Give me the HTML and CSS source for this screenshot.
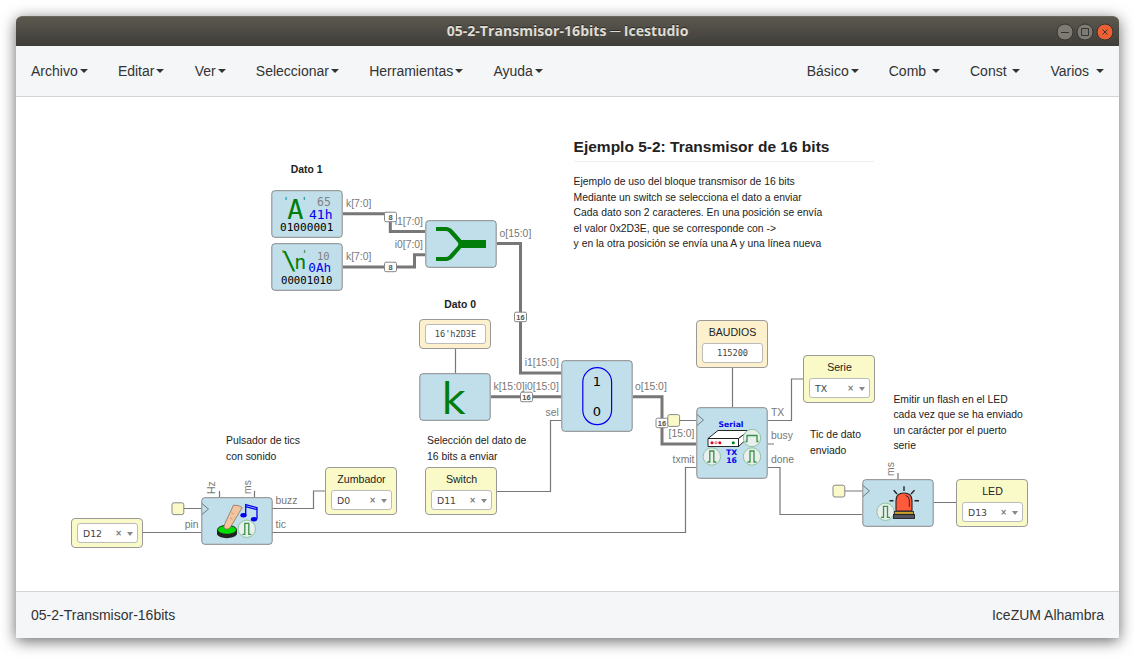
FILE: index.html
```html
<!DOCTYPE html>
<html lang="es">
<head>
<meta charset="utf-8">
<title>05-2-Transmisor-16bits ─ Icestudio</title>
<link rel="stylesheet" href="styles.css">
</head>
<body>
<div class="window">
  <header class="titlebar">
    <span class="title">05-2-Transmisor-16bits ─ Icestudio</span>
    <div class="controls">
      <svg class="control" viewBox="0 0 18 18"><circle cx="9" cy="9" r="8"/><path d="M5 9.5h8"/></svg>
      <svg class="control" viewBox="0 0 18 18"><circle cx="9" cy="9" r="8"/><path d="M5.5 5.500h7v7h-7z"/></svg>
      <svg class="control close" viewBox="0 0 18 18"><circle cx="9" cy="9" r="8"/><path d="M6.500 6.500l5 5M11.500 6.500l-5 5"/></svg>
    </div>
  </header>
  <nav class="menubar">
    <div class="menu menu-main">
      <a>Archivo<i class="caret"></i></a>
      <a>Editar<i class="caret"></i></a>
      <a>Ver<i class="caret"></i></a>
      <a>Seleccionar<i class="caret"></i></a>
      <a>Herramientas<i class="caret"></i></a>
      <a>Ayuda<i class="caret"></i></a>
    </div>
    <div class="menu menu-blocks">
      <a>Básico<i class="caret"></i></a>
      <a>Comb <i class="caret"></i></a>
      <a>Const <i class="caret"></i></a>
      <a>Varios <i class="caret"></i></a>
    </div>
  </nav>
  <main class="canvas">
    <svg class="diagram" viewBox="16 97 1103 494">
      <defs>
        <g id="tic"><circle r="8.700" class="badge"/><path d="M-4.500 5.500H-2V-5.500H2V5.500H4.500" class="pulse"/></g>
        <g id="busy"><circle r="8.700" class="badge"/><path d="M-6.500 3.500H-5V-2.500H5V3.500H6.500" class="pulse"/></g>
      </defs>
      <g class="wire">
        <path d="M455.500 349V373M732.500 367V407"/>
        <path d="M497 491.500H550.500V420.500H561"/>
        <path d="M680 420.500H696M768 420.500H791.500V379H803M768 444H774M768 467.500H780V514.500H862"/>
        <path d="M272 532.500H685.500V467.500H696M272 508.500H313.500V491H325M143 532.500H201M184 508.500H201"/>
        <path d="M219.500 491V497M254.500 491V497M898 473V479M845 491H862M934 502.500H956"/>
      </g>
      <g class="bus">
        <path d="M343 213.700H390.300V231.500H425"/>
        <path d="M343 267H414.500V254.800H425"/>
        <path d="M497 243.500H520.500V373H561"/>
        <path d="M491 396.700H561"/>
        <path d="M633 396.700H662V444H696"/>
      </g>
      <g class="port">
        <text x="346" y="207">k[7:0]</text><text x="346" y="260">k[7:0]</text>
        <text x="423" y="225" class="end">i1[7:0]</text><text x="423" y="248" class="end">i0[7:0]</text>
        <text x="499.500" y="237">o[15:0]</text>
        <text x="558.800" y="366" class="end">i1[15:0]</text><text x="558.800" y="390" class="end">i0[15:0]</text>
        <text x="493.500" y="390">k[15:0]</text><text x="558.800" y="416" class="end">sel</text>
        <text x="635" y="390">o[15:0]</text><text x="694.500" y="437" class="end">[15:0]</text>
        <text x="694.500" y="463" class="end">txmit</text><text x="771" y="416">TX</text>
        <text x="771" y="439">busy</text><text x="771" y="463">done</text>
        <text x="275.500" y="504">buzz</text><text x="275.500" y="528">tic</text>
        <text x="198.500" y="528" class="end">pin</text>
        <text transform="translate(215 494) rotate(-90)">Hz</text>
        <text transform="translate(251 494) rotate(-90)">ms</text>
        <text transform="translate(894 476) rotate(-90)">ms</text>
      </g>
      <g class="block">
        <rect x="271.800" y="190.700" width="70.400" height="46.600" rx="3"/>
        <rect x="271.800" y="243.700" width="70.400" height="46.600" rx="3"/>
        <rect x="425.800" y="220.700" width="70.400" height="46.600" rx="3"/>
        <rect x="419.800" y="373.700" width="70.400" height="46.600" rx="3"/>
        <rect x="561.800" y="360.700" width="70.400" height="70.600" rx="3"/>
        <rect x="696.800" y="407.700" width="70.400" height="70.600" rx="3"/>
        <rect x="862.800" y="479.700" width="70.400" height="46.600" rx="3"/>
        <rect x="201.800" y="497.700" width="70.400" height="46.600" rx="3"/>
      </g>
      <g class="clock"><path d="M697 414.500l6.500 5.500l-6.500 5.500M863 485.500l6.500 5.500l-6.500 5.500M202 503.500l6.500 5.500l-6.500 5.500"/></g>
      <g class="size">
        <rect x="384.500" y="212.200" width="12" height="9.500" rx="1.500"/><text x="390.500" y="220">8</text>
        <rect x="384.500" y="262.200" width="12" height="9.500" rx="1.500"/><text x="390.500" y="270">8</text>
        <rect x="514.500" y="312.200" width="12" height="9.500" rx="1.500"/><text x="520.500" y="320">16</text>
        <rect x="520.500" y="392.200" width="12" height="9.500" rx="1.500"/><text x="526.500" y="400">16</text>
        <rect x="656" y="418.200" width="12" height="9.500" rx="1.500"/><text x="662" y="426">16</text>
      </g>
      <g class="clockpin">
        <rect x="172" y="502.800" width="11.800" height="11.800" rx="2"/>
        <rect x="667.800" y="414.600" width="11.800" height="11.800" rx="2"/>
        <rect x="833" y="485.200" width="11.800" height="11.800" rx="2"/>
      </g>

      <!-- character constants -->
      <g class="mono">
        <text x="283" y="205" class="green" font-size="10">'</text>
        <text x="287.200" y="219" class="green" font-size="27">A</text>
        <text x="301.200" y="205" class="green" font-size="10">'</text>
        <text x="317" y="205.500" class="gray" font-size="11.500">65</text>
        <text x="309" y="218.700" class="blue" font-size="13">41h</text>
        <text x="280" y="231" font-size="11.100">01000001</text>
        <text x="280" y="258" class="green" font-size="10">'</text>
        <text y="269" class="green"><tspan x="282" font-size="25">\</tspan><tspan x="294.300" font-size="20">n</tspan></text>
        <text x="301.500" y="258" class="green" font-size="10">'</text>
        <text x="317" y="260" class="gray" font-size="10.500">10</text>
        <text x="308.300" y="272" class="blue" font-size="12.700">0Ah</text>
        <text x="281" y="284" font-size="10.700">00001010</text>
      </g>
      <text x="441.500" y="414" class="green" font-family="DejaVu Sans" font-size="43" textLength="24" lengthAdjust="spacingAndGlyphs">k</text>

      <!-- bus joiner -->
      <path d="M436 229H446Q449 229 451.500 232L459 240.500Q462 244 459 247.500L451.500 256Q449 259 446 259H436" fill="none" stroke="#007d0a" stroke-width="4.200" stroke-linejoin="round"/>
      <path d="M459 244H486" stroke="#007d0a" stroke-width="8"/>

      <!-- multiplexer -->
      <rect x="582.800" y="367.700" width="28.800" height="57" rx="14.400" fill="none" stroke="#0000ef" stroke-width="1.200"/>
      <text x="597" y="386" class="digit">1</text><text x="597" y="416" class="digit">0</text>

      <!-- serial transmitter -->
      <g class="serial"><text x="731" y="427">Serial</text><text x="731.500" y="455">TX</text><text x="731.500" y="463">16</text></g>
      <g stroke="#111" stroke-width=".9" fill="#fff" stroke-linejoin="round">
        <path d="M708 438.500L718 430.500H749L738.500 438.500Z"/><path d="M708 438.500H738.500V446.500H708Z"/><path d="M738.500 438.500L749 430.500V437L738.500 446.500Z"/>
      </g>
      <g fill="#e0001b"><circle cx="712" cy="442.700" r="1.500"/><circle cx="719.800" cy="442.700" r="1.500"/><circle cx="716" cy="442.700" r="1.100" fill="#fff" stroke="#e0001b" stroke-width=".6"/><circle cx="733.300" cy="442.700" r="1.500" fill="#007d0a"/></g>
      <use href="#busy" x="752" y="438"/><use href="#tic" x="711.800" y="456.500"/><use href="#tic" x="752" y="456.500"/>

      <!-- push button -->
      <path d="M217 530v4c1.500 5.500 18 5.500 20 0V530" fill="#222"/>
      <ellipse cx="227" cy="529.800" rx="9.500" ry="4.500" fill="#00e000" stroke="#222" stroke-width="1"/>
      <path d="M233.500 505.200q4.500-.5 8.700 2.300L230 528q-3 2.200-5.800.3q-.7-2 .8-5Z" fill="#f2c5a0" stroke="#705444" stroke-width=".6"/>
      <path d="M231.500 513l2.500 1M230 518l2.500 1" stroke="#a57455" stroke-width=".5"/>
      <g stroke="#0000ef" fill="none" stroke-width="1.300"><path d="M245.700 515V504.700L257 507.700V519M245.700 506.700L257 509.700"/></g>
      <g fill="#0000ef"><ellipse cx="243.500" cy="515.300" rx="3.100" ry="2.200"/><ellipse cx="254" cy="519.200" rx="3.100" ry="2.200"/></g>
      <use href="#tic" x="246.800" y="528.800"/>

      <!-- beacon -->
      <use href="#tic" x="885.500" y="511.800"/>
      <path d="M896 511V500.500q0-7.500 8-7.500t8 7.500V511Z" fill="#ff5a3c" stroke="#222" stroke-width="1.100"/>
      <path d="M905.500 495.500q3.800.8 3.800 4.500V507" fill="none" stroke="#222" stroke-width=".9"/>
      <rect x="894.500" y="511.500" width="19" height="2.800" fill="#c9a227" stroke="#222" stroke-width=".8"/>
      <rect x="893.500" y="514.500" width="21" height="4" fill="#555360" stroke="#222" stroke-width=".9"/>
      <path d="M904 486.200V491M893.700 490.300L897 494M914.500 490.300L911 494M889.500 500.700H893.500M914.500 500.700H919" stroke="#222" stroke-width="1.400"/>
    </svg>

    <p class="note n-dato1"><b>Dato 1</b></p>
    <p class="note n-dato0"><b>Dato 0</b></p>
    <section class="note n-intro">
      <h1>Ejemplo 5-2: Transmisor de 16 bits</h1>
      <p>Ejemplo de uso del bloque transmisor de 16 bits<br>Mediante un switch se selecciona el dato a enviar<br>Cada dato son 2 caracteres. En una posición se envía<br>el valor 0x2D3E, que se corresponde con -&gt;<br>y en la otra posición se envía una A y una línea nueva</p>
    </section>
    <p class="note n-pulsador">Pulsador de tics<br>con sonido</p>
    <p class="note n-switch">Selección del dato de<br>16 bits a enviar</p>
    <p class="note n-tic">Tic de dato<br>enviado</p>
    <p class="note n-flash">Emitir un flash en el LED<br>cada vez que se ha enviado<br>un carácter por el puerto<br>serie</p>

    <div class="node param bare p-dato0"><div class="field">16'h2D3E</div></div>
    <div class="node param p-baud"><label>BAUDIOS</label><div class="field">115200</div></div>
    <div class="node p-serie"><label>Serie</label><div class="field select">TX<span class="clear">×</span><i class="arrow"></i></div></div>
    <div class="node p-zumbador"><label>Zumbador</label><div class="field select">D0<span class="clear">×</span><i class="arrow"></i></div></div>
    <div class="node p-switch"><label>Switch</label><div class="field select">D11<span class="clear">×</span><i class="arrow"></i></div></div>
    <div class="node bare p-d12"><div class="field select">D12<span class="clear">×</span><i class="arrow"></i></div></div>
    <div class="node p-led"><label>LED</label><div class="field select">D13<span class="clear">×</span><i class="arrow"></i></div></div>
  </main>
  <footer class="statusbar"><span>05-2-Transmisor-16bits</span><span>IceZUM Alhambra</span></footer>
</div>
</body>
</html>
```
FILE: styles.css
```css
* { box-sizing: border-box; }
body { margin: 0; padding: 16px 15px 24px 16px; height: 662px; overflow: hidden; background: #fff; font-family: "Liberation Sans", Arial, sans-serif; color: #333; }
.window { display: flex; flex-direction: column; height: 622px; border-radius: 6px 6px 0 0; box-shadow: 0 3px 15px rgba(0,0,0,.6); background: #fff; }
.titlebar { display: grid; grid-template-columns: 1fr auto 1fr; align-items: center; height: 30px; border-radius: 6px 6px 0 0; background: linear-gradient(#5b584e, #3e3d39); border-top: 1px solid #6b685f; }
.title { grid-column: 2; padding-bottom: 2px; color: #dfdbd2; font: bold 14.1px "Open Sans", "Noto Sans", sans-serif; text-shadow: 0 -1px #2c2b28; white-space: nowrap; }
.controls { display: flex; justify-content: flex-end; gap: 2px; padding-right: 5px; }
.control { width: 18px; height: 18px; fill: #7d7b73; stroke: #363530; stroke-width: 1; }
.control path { fill: none; }
.close { fill: #ed5f34; }
.menubar { display: flex; justify-content: space-between; align-items: center; height: 51px; padding: 0 15px; background: #f4f6f8; border-bottom: 1px solid #d2d6da; font-size: 14px; }
.menu { display: flex; gap: 30.2px; white-space: pre; }
.menu-blocks { gap: 30px; }
.menu-blocks a:last-child .caret { margin-left: 3px; }
.menu a { display: flex; align-items: center; }
.caret { margin-left: 2px; border: 4px solid transparent; border-top-color: #333; border-bottom: 0; }
.canvas { position: relative; height: 494px; background: #fff; }
.diagram { display: block; width: 1103px; height: 494px; }
.wire path { fill: none; stroke: #777; stroke-width: 1.2; }
.bus path { fill: none; stroke: #777; stroke-width: 3; }
.port { font-size: 10.4px; fill: #777; }
.end { text-anchor: end; }
.block rect { fill: #c0dfeb; stroke: #888; stroke-width: 1; }
.clock path { fill: none; stroke: #777; stroke-width: 1; }
.clockpin rect { fill: #fafac8; stroke: #888; stroke-width: 1; }
.size rect { fill: #fff; stroke: #888; stroke-width: 1; }
.size text { font: bold 7.5px "Liberation Sans", sans-serif; fill: #555; text-anchor: middle; }
.mono text { font-family: "DejaVu Sans Mono", monospace; }
.green { fill: #007d0a; }
.mono .gray { fill: #808080; }
.mono .blue { fill: #0000ef; }
.digit { font: 13px "DejaVu Sans", sans-serif; text-anchor: middle; }
.serial text { font: bold 7.7px "DejaVu Sans", sans-serif; fill: #0000ef; text-anchor: middle; }
.badge { fill: #e8efec; stroke: #8fc3a2; stroke-width: 1; }
.pulse { fill: none; stroke: #389248; stroke-width: 1.3; }
.note { position: absolute; margin: 0; font-size: 10.4px; line-height: 15.6px; color: #222; white-space: nowrap; }
.note h1 { margin: 0 0 12px; padding-bottom: 5px; border-bottom: 1px solid #eee; font-size: 15.5px; line-height: 19px; }
.note p { margin: 0; }
.n-dato1 { left: 274.7px; top: 65px; }
.n-dato0 { left: 428.3px; top: 200px; }
.n-intro { left: 557.6px; top: 40px; width: 300px; }
.n-intro p { font-size: 10.36px; }
.n-pulsador { left: 210px; top: 336px; }
.n-switch { left: 411px; top: 336px; }
.n-tic { left: 794px; top: 330px; }
.n-flash { left: 877.4px; top: 294.6px; }
.node { position: absolute; display: flex; flex-direction: column; align-items: stretch; width: 72px; height: 48px; padding: 4px 4px 4px 5px; border: 1px solid #999; border-radius: 4px; background: #fafac8; }
.node.bare { height: 30px; }
.node.param { background: #fcf0cd; }
.node label { height: 18px; font-size: 10.6px; line-height: 15px; text-align: center; color: #222; }
.field { display: flex; align-items: center; justify-content: center; height: 20px; border: 1px solid #bbb; border-radius: 3px; background: #fff; color: #444; font: 8.6px "DejaVu Sans Mono", monospace; }
.select { justify-content: flex-start; padding: 0 4px 0 5px; font: 9.3px "DejaVu Sans", sans-serif; }
.clear { margin-left: auto; margin-right: 5px; font-size: 8px; font-weight: bold; color: #777; }
.arrow { margin-top: 1px; border: 3px solid transparent; border-top: 4px solid #888; border-bottom: 0; }
.p-dato0 { left: 403px; top: 222px; }
.p-baud { left: 680px; top: 223px; }
.p-serie { left: 787px; top: 258px; }
.p-zumbador { left: 309px; top: 370px; }
.p-switch { left: 409px; top: 370px; }
.p-d12 { left: 55px; top: 421px; }
.p-led { left: 940px; top: 382px; }
.statusbar { display: flex; justify-content: space-between; align-items: center; height: 47px; padding: 0 15px; background: #f4f6f8; border-top: 1px solid #d2d6da; font-size: 14px; }
```
